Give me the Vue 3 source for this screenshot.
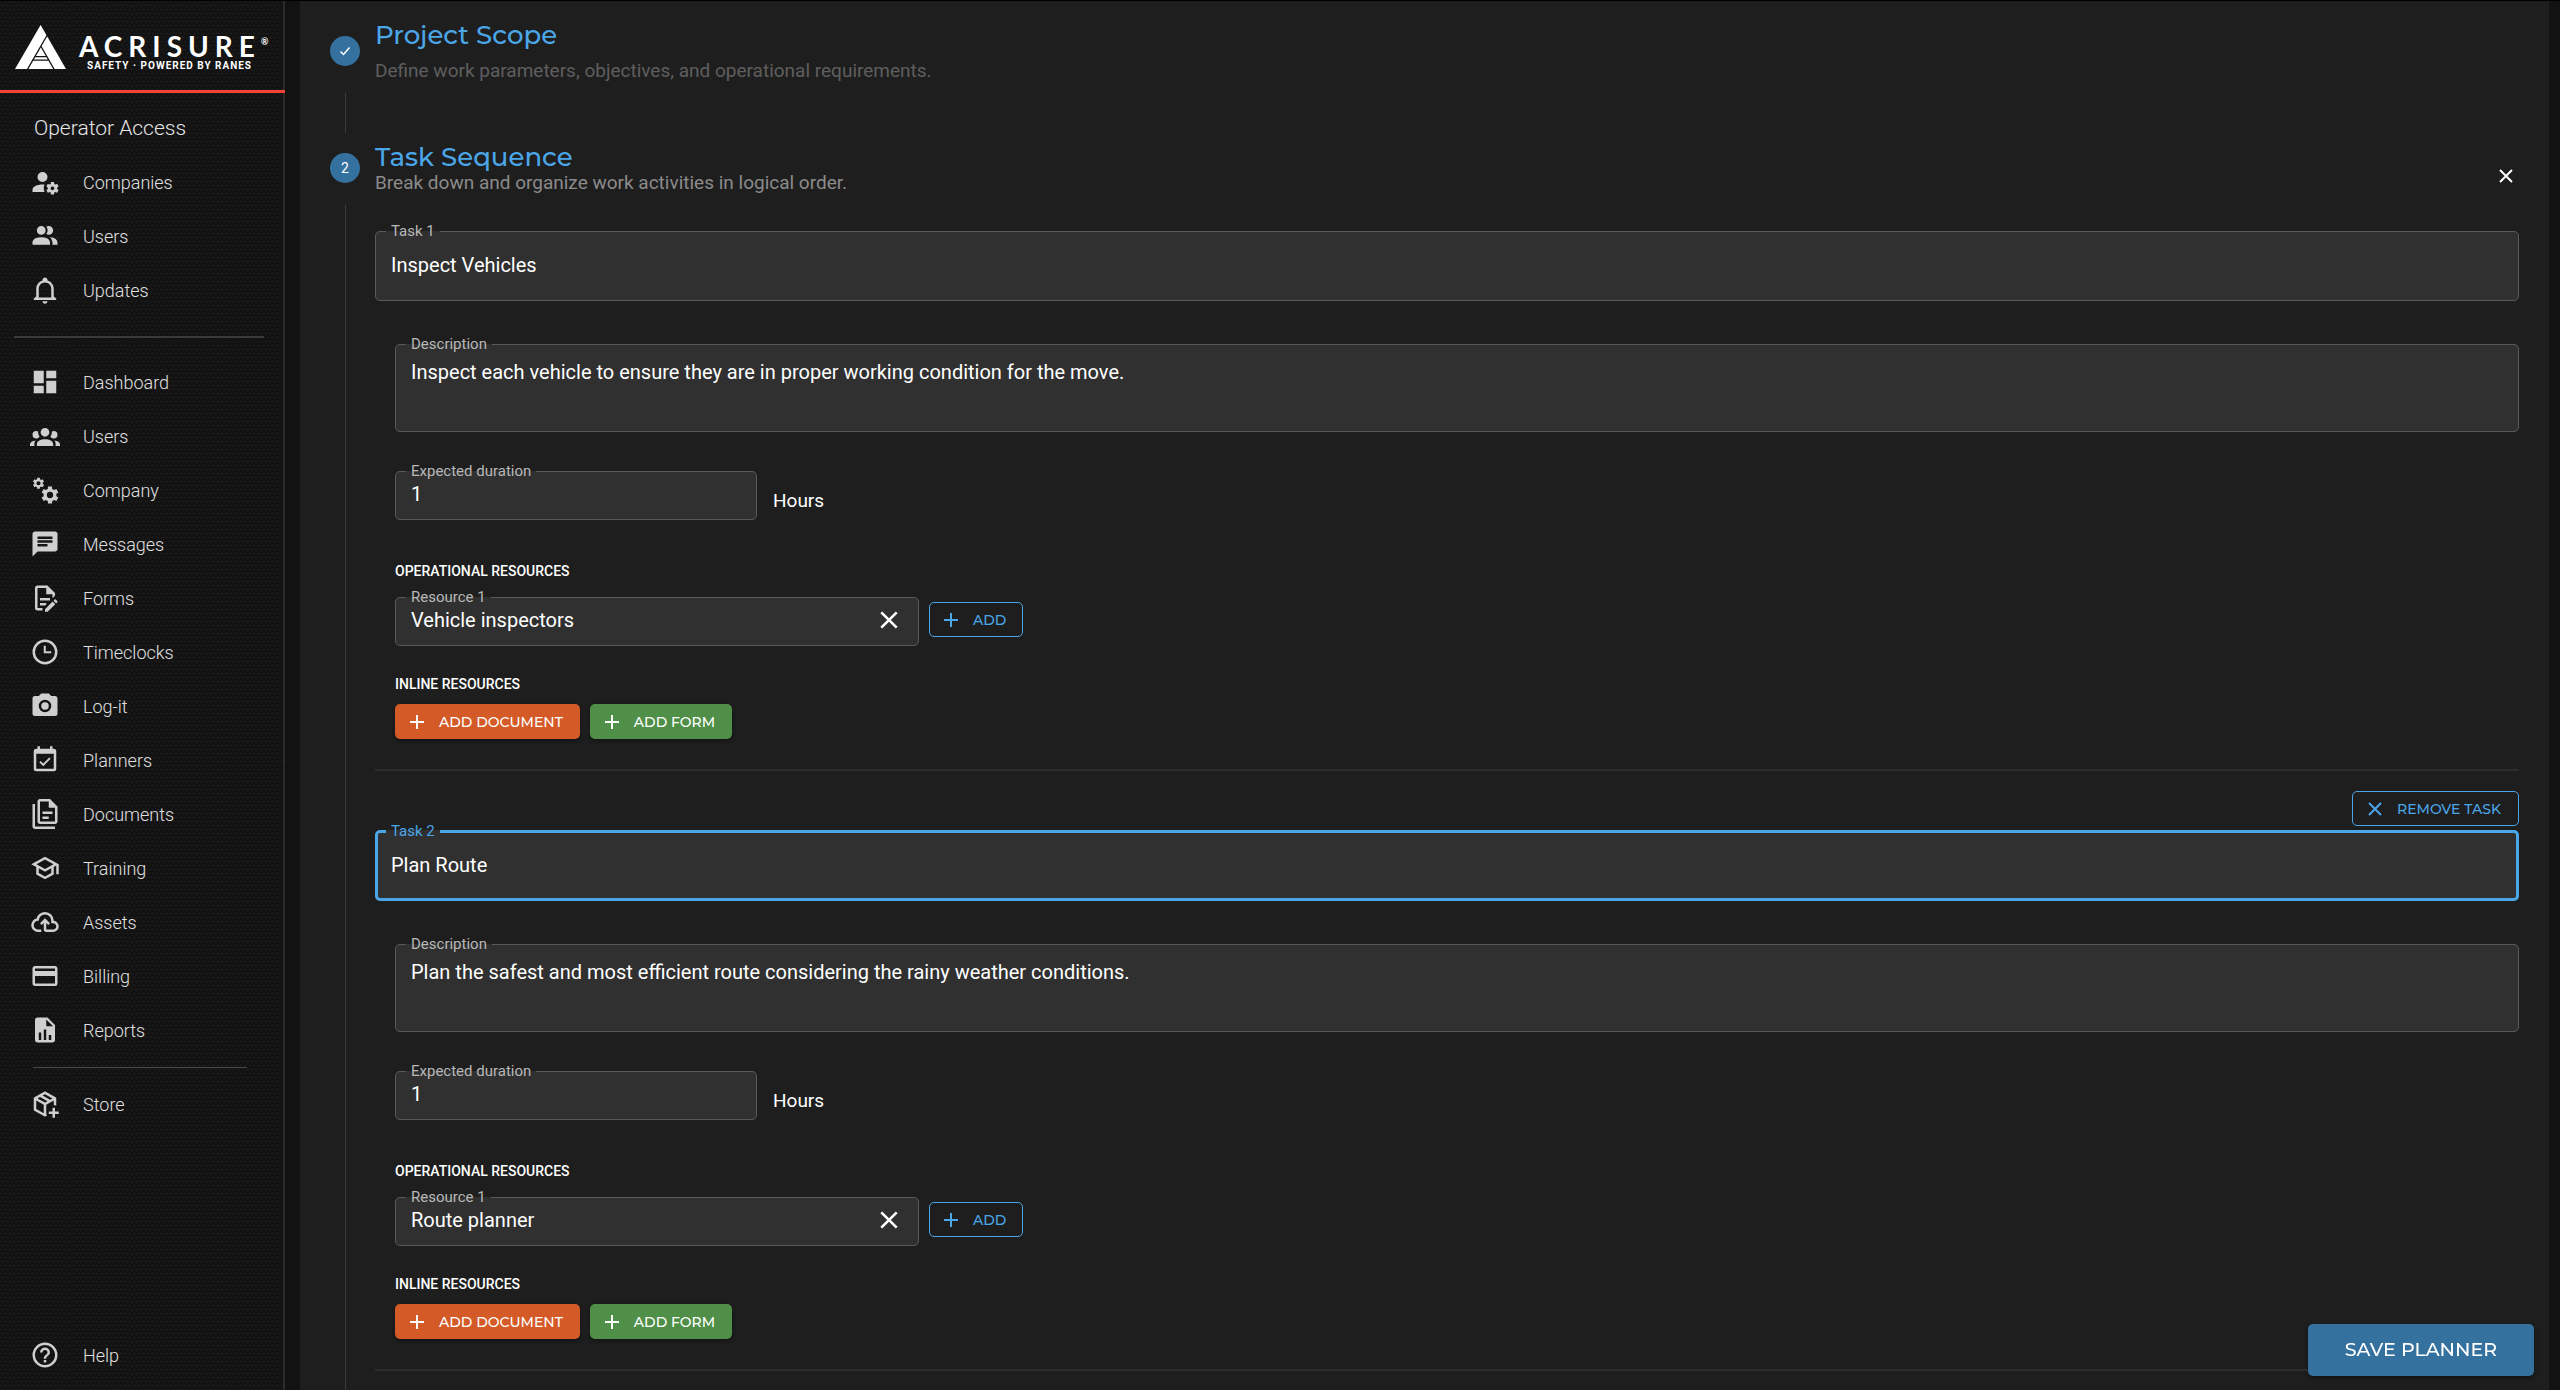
<template>
  <div class="app-shell">
    <aside class="sidebar">
      <a class="brand" href="#home">
        <svg class="brand-mark" viewBox="0 0 51 44" aria-hidden="true">
          <path fill="#fff" d="M25.6 0L51 44H0z" />
          <path
            fill="none"
            stroke="#131313"
            stroke-width="1.3"
            d="M12.4 44.5L32.6 9.5M39.2 44.5L25.8 21M19.5 31.6H32.5M17 35.2H34.5"
          />
        </svg>
        <span class="brand-text">
          <span class="brand-name">ACRISURE<sup>®</sup></span>
          <span class="brand-sub">SAFETY · POWERED BY RANES</span>
        </span>
      </a>

      <h2 class="nav-title">Operator Access</h2>
      <nav class="nav">
        <a v-for="item in operatorItems" :key="item.label" class="nav-item" href="#">
          <svg class="nav-icon" viewBox="0 0 24 24"><path :d="item.icon" /></svg>
          {{ item.label }}
        </a>
      </nav>
      <hr class="nav-divider" />
      <nav class="nav">
        <a v-for="item in mainItems" :key="item.label" class="nav-item" href="#">
          <svg class="nav-icon" viewBox="0 0 24 24"><path :d="item.icon" /></svg>
          {{ item.label }}
        </a>
      </nav>
      <hr class="nav-divider inset" />
      <nav class="nav">
        <a class="nav-item" href="#">
          <svg class="nav-icon" viewBox="0 0 24 24"><path :d="icons.store" /></svg>
          Store
        </a>
      </nav>
      <nav class="nav nav-bottom">
        <a class="nav-item" href="#">
          <svg class="nav-icon" viewBox="0 0 24 24"><path :d="icons.help" /></svg>
          Help
        </a>
      </nav>
    </aside>

    <main class="panel">
      <section class="step">
        <header class="step-header">
          <span class="step-badge">
            <svg class="check" viewBox="0 0 12 12"><path d="M1.5 6.5l3 3 6-7" /></svg>
          </span>
          <div class="step-text">
            <h1 class="step-title">Project Scope</h1>
            <p class="step-sub muted">
              Define work parameters, objectives, and operational requirements.
            </p>
          </div>
        </header>
        <div class="connector"></div>
      </section>

      <section class="step">
        <header class="step-header">
          <span class="step-badge">2</span>
          <div class="step-text">
            <h1 class="step-title">Task Sequence</h1>
            <p class="step-sub">Break down and organize work activities in logical order.</p>
          </div>
          <button class="close" type="button" aria-label="Close">
            <svg viewBox="0 0 14 14"><path d="M1 1l12 12M13 1L1 13" /></svg>
          </button>
        </header>

        <div class="step-body">
          <article v-for="(task, i) in tasks" :key="i" class="task">
            <div v-if="i > 0" class="task-actions">
              <button class="btn outlined" type="button" @click="removeTask(i)">
                <svg viewBox="0 0 14 14"><path d="M1 1l12 12M13 1L1 13" /></svg>
                REMOVE TASK
              </button>
            </div>

            <fieldset class="field name" :class="{ active: activeTask === i }">
              <legend><label :for="`task-${i}`">Task {{ i + 1 }}</label></legend>
              <input :id="`task-${i}`" v-model="task.name" type="text" />
            </fieldset>

            <div class="task-details">
              <fieldset class="field description">
                <legend><label :for="`desc-${i}`">Description</label></legend>
                <textarea :id="`desc-${i}`" v-model="task.description"></textarea>
              </fieldset>

              <div class="duration">
                <fieldset class="field small">
                  <legend><label :for="`duration-${i}`">Expected duration</label></legend>
                  <input :id="`duration-${i}`" v-model="task.duration" type="text" />
                </fieldset>
                <span class="unit">Hours</span>
              </div>

              <h3 class="group-title">OPERATIONAL RESOURCES</h3>
              <div class="resources">
                <fieldset class="field resource">
                  <legend><label :for="`resource-${i}`">Resource 1</label></legend>
                  <div class="resource-row">
                    <input :id="`resource-${i}`" v-model="task.resource" type="text" />
                    <button
                      class="clear"
                      type="button"
                      aria-label="Clear resource"
                      @click="task.resource = ''"
                    >
                      <svg viewBox="0 0 14 14"><path d="M1 1l12 12M13 1L1 13" /></svg>
                    </button>
                  </div>
                </fieldset>
                <button class="btn outlined" type="button">
                  <svg viewBox="0 0 14 14"><path d="M7 0v14M0 7h14" /></svg>
                  ADD
                </button>
              </div>

              <h3 class="group-title inline">INLINE RESOURCES</h3>
              <div class="inline-actions">
                <button class="btn orange" type="button">
                  <svg viewBox="0 0 14 14"><path d="M7 0v14M0 7h14" /></svg>
                  ADD DOCUMENT
                </button>
                <button class="btn green" type="button">
                  <svg viewBox="0 0 14 14"><path d="M7 0v14M0 7h14" /></svg>
                  ADD FORM
                </button>
              </div>
            </div>
          </article>
        </div>
      </section>
    </main>

    <button class="save" type="button">SAVE PLANNER</button>
  </div>
</template>

<script setup>
import { ref } from "vue";

// six-toothed cog with a round hole, for the company icon
function cog(cx, cy, r) {
  const points = [];
  for (let i = 0; i < 6; i++) {
    const base = (i * 60 - 90) * (Math.PI / 180);
    for (const [offset, radius] of [
      [-0.34, 0.74],
      [-0.24, 1],
      [0.24, 1],
      [0.34, 0.74],
    ]) {
      const x = cx + Math.cos(base + offset) * r * radius;
      const y = cy + Math.sin(base + offset) * r * radius;
      points.push(`${x.toFixed(2)} ${y.toFixed(2)}`);
    }
  }
  const h = r * 0.36;
  return `M${points.join("L")}ZM${cx - h} ${cy}a${h} ${h} 0 1 0 ${2 * h} 0a${h} ${h} 0 1 0 ${-2 * h} 0Z`;
}

const icons = {
  companies:
    "M10 4A4 4 0 0 0 6 8A4 4 0 0 0 10 12A4 4 0 0 0 14 8A4 4 0 0 0 10 4M17 12C16.87 12 16.76 12.09 16.74 12.21L16.55 13.53C16.25 13.66 15.96 13.82 15.7 14L14.46 13.5C14.35 13.5 14.22 13.5 14.15 13.63L13.15 15.36C13.09 15.47 13.11 15.6 13.21 15.68L14.27 16.5C14.25 16.67 14.24 16.83 14.24 17C14.24 17.17 14.25 17.33 14.27 17.5L13.21 18.32C13.12 18.4 13.09 18.53 13.15 18.64L14.15 20.37C14.21 20.5 14.34 20.5 14.46 20.5L15.7 20C15.96 20.18 16.24 20.35 16.55 20.47L16.74 21.79C16.76 21.91 16.86 22 17 22H19C19.11 22 19.22 21.91 19.24 21.79L19.43 20.47C19.73 20.34 20 20.18 20.27 20L21.5 20.5C21.63 20.5 21.76 20.5 21.83 20.37L22.83 18.64C22.89 18.53 22.86 18.4 22.77 18.32L21.7 17.5C21.72 17.33 21.74 17.17 21.74 17C21.74 16.83 21.73 16.67 21.7 16.5L22.76 15.68C22.85 15.6 22.88 15.47 22.82 15.36L21.82 13.63C21.76 13.5 21.63 13.5 21.5 13.5L20.27 14C20 13.82 19.73 13.65 19.42 13.53L19.23 12.21C19.22 12.09 19.11 12 19 12H17M10 14C5.58 14 2 15.79 2 18V20H11.68A7 7 0 0 1 11 17A7 7 0 0 1 11.64 14.09C11.11 14.03 10.56 14 10 14M18 15.5C18.83 15.5 19.5 16.17 19.5 17C19.5 17.83 18.83 18.5 18 18.5C17.16 18.5 16.5 17.83 16.5 17C16.5 16.17 17.17 15.5 18 15.5Z",
  people:
    "M16 17V19H2V17S2 13 9 13 16 17 16 17M12.5 7.5A3.5 3.5 0 1 0 9 11A3.5 3.5 0 0 0 12.5 7.5M15.94 13A5.32 5.32 0 0 1 18 17V19H22V17S22 13.37 15.94 13M15 4A3.39 3.39 0 0 0 13.07 4.59A5 5 0 0 1 13.07 10.41A3.39 3.39 0 0 0 15 11A3.5 3.5 0 0 0 15 4Z",
  bell: "M10 21H14C14 22.1 13.1 23 12 23S10 22.1 10 21M21 19V20H3V19L5 17V11C5 7.9 7 5.2 10 4.3V4C10 2.9 10.9 2 12 2S14 2.9 14 4V4.3C17 5.2 19 7.9 19 11V17L21 19M17 11C17 8.2 14.8 6 12 6S7 8.2 7 11V18H17V11Z",
  dashboard: "M13 3V9H21V3M13 21H21V11H13M3 21H11V15H3M3 13H11V3H3V13Z",
  group:
    "M12 5.5A3.5 3.5 0 0 1 15.5 9A3.5 3.5 0 0 1 12 12.5A3.5 3.5 0 0 1 8.5 9A3.5 3.5 0 0 1 12 5.5M5 8C5.56 8 6.08 8.15 6.53 8.42C6.38 9.85 6.8 11.27 7.66 12.38C7.16 13.34 6.16 14 5 14A3 3 0 0 1 2 11A3 3 0 0 1 5 8M19 8A3 3 0 0 1 22 11A3 3 0 0 1 19 14C17.84 14 16.84 13.34 16.34 12.38C17.2 11.27 17.62 9.85 17.47 8.42C17.92 8.15 18.44 8 19 8M5.5 18.25C5.5 16.18 8.41 14.5 12 14.5C15.59 14.5 18.5 16.18 18.5 18.25V20H5.5V18.25M0 20V18.5C0 17.11 1.89 15.94 4.45 15.6C3.86 16.28 3.5 17.22 3.5 18.25V20H0M24 20H20.5V18.25C20.5 17.22 20.14 16.28 19.55 15.6C22.11 15.94 24 17.11 24 18.5V20Z",
  cogs: cog(6.8, 6.6, 4.6) + cog(16, 16, 7),
  message:
    "M20 2H4c-1.1 0-1.99.9-1.99 2L2 22l4-4h14c1.1 0 2-.9 2-2V4c0-1.1-.9-2-2-2zM6 9h12v2H6V9zm8 5H6v-2h8v2zm4-6H6V6h12v2z",
  form: "M8 12H16V14H8V12M10 20H6V4H13V9H18V12.1L20 10.1V8L14 2H6A2 2 0 0 0 4 4V20A2 2 0 0 0 6 22H10V20M8 18H12.1L13 17.1V16H8V18M20.2 13C20.3 13 20.5 13.1 20.6 13.2L21.9 14.5C22.1 14.7 22.1 15.1 21.9 15.3L20.9 16.3L18.8 14.2L19.8 13.2C19.9 13.1 20 13 20.2 13M20.2 16.9L14.1 23H12V20.9L18.1 14.8L20.2 16.9Z",
  clock:
    "M12 20A8 8 0 0 0 20 12A8 8 0 0 0 12 4A8 8 0 0 0 4 12A8 8 0 0 0 12 20M12 2A10 10 0 0 1 22 12A10 10 0 0 1 12 22A10 10 0 0 1 2 12A10 10 0 0 1 12 2M11 7H12.6V11.4H17V13H11Z",
  camera:
    "M4 4H7L9 2H15L17 4H20A2 2 0 0 1 22 6V18A2 2 0 0 1 20 20H4A2 2 0 0 1 2 18V6A2 2 0 0 1 4 4M12 7A5 5 0 0 0 7 12A5 5 0 0 0 12 17A5 5 0 0 0 17 12A5 5 0 0 0 12 7M12 9A3 3 0 0 1 15 12A3 3 0 0 1 12 15A3 3 0 0 1 9 12A3 3 0 0 1 12 9Z",
  calendar:
    "M19 3H18V1H16V3H8V1H6V3H5A2 2 0 0 0 3 5V19A2 2 0 0 0 5 21H19A2 2 0 0 0 21 19V5A2 2 0 0 0 19 3M19 19H5V7H19V19M10.6 17L16.5 11L15.4 10L10.6 14.8L8.5 12.7L7.4 13.8Z",
  documents:
    "M16 0H8C6.9 0 6 .9 6 2V18C6 19.1 6.9 20 8 20H20C21.1 20 22 19.1 22 18V6L16 0M20 18H8V2H15V7H20V18M4 4V22H20V24H4C2.9 24 2 23.1 2 22V4H4M10 10V12H18V10H10M10 14V16H15V14H10Z",
  school:
    "M12 3L1 9L5 11.18V17.18L12 21L19 17.18V11.18L21 10.09V17H23V9L12 3M18.82 9L12 12.72L5.18 9L12 5.28L18.82 9M17 16L12 18.72L7 16V12.27L12 15L17 12.27V16Z",
  cloud:
    "M6.5 20Q4.22 20 2.61 18.43 1 16.85 1 14.58 1 12.63 2.17 11.1 3.35 9.57 5.25 9.15 5.88 6.85 7.75 5.43 9.63 4 12 4 14.93 4 16.96 6.04 19 8.07 19 11 20.73 11.2 21.86 12.5 23 13.78 23 15.5 23 17.38 21.69 18.69 20.38 20 18.5 20H13Q12.18 20 11.59 19.41 11 18.83 11 18V12.85L9.4 14.4 8 13 12 9 16 13 14.6 14.4 13 12.85V18H18.5Q19.55 18 20.27 17.27 21 16.55 21 15.5 21 14.45 20.27 13.73 19.55 13 18.5 13H17V11Q17 8.93 15.54 7.46 14.08 6 12 6 9.93 6 8.46 7.46 7 8.93 7 11H6.5Q5.05 11 4.03 12.03 3 13.05 3 14.5 3 15.95 4.03 17 5.05 18 6.5 18H9V20Z",
  card: "M20 8H4V6H20M20 18H4V12H20M20 4H4C2.89 4 2 4.89 2 6V18C2 19.11 2.9 20 4 20H20A2 2 0 0 0 22 18V6C22 4.89 21.1 4 20 4Z",
  report:
    "M14 2H6C4.9 2 4 2.9 4 4V20C4 21.1 4.9 22 6 22H18C19.1 22 20 21.1 20 20V8L14 2M13 9V3.5L18.5 9H13M7 20V14H9V20H7M11 20V11.5H13V20H11M15 20V16H17V20H15Z",
  store:
    "M13 19.3V12.6L19 9.2V13C19.7 13 20.4 13.1 21 13.4V7.5C21 7.1 20.8 6.8 20.5 6.6L12.6 2.2C12.4 2.1 12.2 2 12 2S11.6 2.1 11.4 2.2L3.5 6.6C3.2 6.8 3 7.1 3 7.5V16.5C3 16.9 3.2 17.2 3.5 17.4L11.4 21.8C11.6 21.9 11.8 22 12 22S12.4 21.9 12.6 21.8L13.5 21.3C13.2 20.7 13.1 20 13 19.3M12 4.2L18 7.5L16 8.6L10.1 5.2L12 4.2M11 19.3L5 15.9V9.2L11 12.6V19.3M12 10.8L6 7.5L8 6.3L14 9.7L12 10.8M20 15V18H23V20H20V23H18V20H15V18H18V15H20Z",
  help: "M11 18H13V16H11V18M12 2A10 10 0 0 0 2 12A10 10 0 0 0 12 22A10 10 0 0 0 22 12A10 10 0 0 0 12 2M12 20C7.59 20 4 16.41 4 12C4 7.59 7.59 4 12 4C16.41 4 20 7.59 20 12C20 16.41 16.41 20 12 20M12 6A4 4 0 0 0 8 10H10A2 2 0 0 1 12 8A2 2 0 0 1 14 10C14 12 11 11.75 11 15H13C13 12.75 16 12.5 16 10A4 4 0 0 0 12 6Z",
};

const operatorItems = [
  { label: "Companies", icon: icons.companies },
  { label: "Users", icon: icons.people },
  { label: "Updates", icon: icons.bell },
];

const mainItems = [
  { label: "Dashboard", icon: icons.dashboard },
  { label: "Users", icon: icons.group },
  { label: "Company", icon: icons.cogs },
  { label: "Messages", icon: icons.message },
  { label: "Forms", icon: icons.form },
  { label: "Timeclocks", icon: icons.clock },
  { label: "Log-it", icon: icons.camera },
  { label: "Planners", icon: icons.calendar },
  { label: "Documents", icon: icons.documents },
  { label: "Training", icon: icons.school },
  { label: "Assets", icon: icons.cloud },
  { label: "Billing", icon: icons.card },
  { label: "Reports", icon: icons.report },
];

const activeTask = ref(1);
const tasks = ref([
  {
    name: "Inspect Vehicles",
    description:
      "Inspect each vehicle to ensure they are in proper working condition for the move.",
    duration: "1",
    resource: "Vehicle inspectors",
  },
  {
    name: "Plan Route",
    description:
      "Plan the safest and most efficient route considering the rainy weather conditions.",
    duration: "1",
    resource: "Route planner",
  },
]);

function removeTask(index) {
  tasks.value.splice(index, 1);
}
</script>

<style>
body {
  margin: 0;
  background: #121212;
}
</style>

<style scoped>
.app-shell {
  display: flex;
  height: 100vh;
  overflow: hidden;
  box-sizing: border-box;
  border-top: 1px solid #000;
  background: #121212;
  color: #fff;
  font-family: Roboto, sans-serif;
  font-size: 18px;
}

.app-shell * {
  box-sizing: border-box;
}

h1,
h2,
h3,
p {
  margin: 0;
}

/* Sidebar */
.sidebar {
  display: flex;
  flex-direction: column;
  flex: 0 0 285px;
  border-right: 2px solid #2b2b2b;
  background-color: #131313;
  background-image: repeating-linear-gradient(
      0deg,
      rgba(255, 255, 255, 0.025) 0 1px,
      transparent 1px 4px
    ),
    repeating-linear-gradient(60deg, rgba(0, 0, 0, 0.25) 0 1px, transparent 1px 4px),
    repeating-linear-gradient(120deg, rgba(255, 255, 255, 0.02) 0 1px, transparent 1px 4px);
}

.brand {
  display: flex;
  align-items: flex-end;
  gap: 13px;
  height: 92px;
  margin-right: -2px;
  padding: 0 0 21px 15px;
  border-bottom: 3px solid #f44336;
  color: #fff;
  text-decoration: none;
}

.brand-mark {
  width: 51px;
  height: 44px;
}

.brand-text {
  display: flex;
  flex-direction: column;
  margin-bottom: -3px;
}

.brand-name {
  font: 700 28px/28px Lato, sans-serif;
  letter-spacing: 6px;
  white-space: nowrap;
}

.brand-name sup {
  font-size: 9px;
  line-height: 9px;
  vertical-align: 12px;
  letter-spacing: 0;
}

.brand-sub {
  padding-left: 8px;
  font-size: 10px;
  font-weight: 700;
  line-height: 12px;
  letter-spacing: 1px;
  white-space: nowrap;
}

.nav-title {
  padding: 8px 0 0 34px;
  font-size: 21px;
  font-weight: 300;
  line-height: 54px;
  color: #e6e6e6;
}

.nav {
  display: flex;
  flex-direction: column;
}

.nav-item {
  display: flex;
  align-items: center;
  gap: 23px;
  height: 54px;
  padding-left: 30px;
  font-weight: 300;
  color: #e0e0e0;
  text-decoration: none;
}

.nav-icon {
  width: 30px;
  height: 30px;
  fill: #cfcfcf;
  fill-rule: evenodd;
}

.nav-divider {
  width: auto;
  height: 2px;
  margin: 19px 19px 17px 14px;
  border: 0;
  background: #3a3a3a;
}

.nav-divider.inset {
  height: 1px;
  margin: 10px 36px 9px 33px;
  background: #4a4a4a;
}

.nav-bottom {
  margin-top: auto;
  padding-bottom: 8px;
}

/* Stepper */
.panel {
  flex: 1;
  min-width: 0;
  margin: 0 11px 0 15px;
  padding: 19px 30px 0;
  background: #1e1e1e;
}

.step-header {
  display: flex;
  align-items: center;
  gap: 15px;
}

.step-badge {
  display: flex;
  align-items: center;
  justify-content: center;
  width: 30px;
  height: 30px;
  border-radius: 50%;
  background: #35719f;
  font-size: 14px;
}

.check {
  width: 12px;
  height: 12px;
  fill: none;
  stroke: #fff;
  stroke-width: 1.5;
}

.step-title {
  font-family: Montserrat, Inter, sans-serif;
  font-size: 26px;
  font-weight: 500;
  line-height: 30px;
  color: #4ba6e8;
}

.step-sub {
  font-size: 19px;
  line-height: 22px;
  color: #8b8b8b;
}

.step-sub.muted {
  margin-top: 10px;
  color: #5e5e5e;
}

.connector {
  width: 1px;
  height: 40px;
  margin: 11px 0 9px 15px;
  background: #3c3c3c;
}

.close {
  align-self: flex-end;
  width: 26px;
  height: 36px;
  margin-left: auto;
  padding: 0;
  border: 0;
  background: none;
}

.close svg {
  display: block;
  width: 14px;
  height: 14px;
  margin: auto;
}

svg path[d^="M1 1"],
.btn path {
  fill: none;
  stroke: currentColor;
  stroke-width: 2;
}

.close,
.clear {
  color: #fff;
}

.step-body {
  margin: 11px 0 0 15px;
  padding: 16px 0 40px 29px;
  border-left: 1px solid #3c3c3c;
}

/* Task form */
.task {
  margin-bottom: 20px;
  padding-bottom: 30px;
  border-bottom: 2px solid #2e2e2e;
}

.task-actions {
  display: flex;
  justify-content: flex-end;
  margin-bottom: -5px;
}

.task-details {
  padding-left: 20px;
}

.field {
  min-width: 0;
  margin: 0;
  padding: 0 15px 12px;
  border: 1px solid #5a5a5a;
  border-radius: 5px;
  background: #303030;
}

.field legend {
  margin-left: -5px;
  padding: 0 5px;
  font-size: 15px;
  line-height: 20px;
  color: #b8b8b8;
}

.field legend label {
  display: block;
}

.field input,
.field textarea {
  display: block;
  width: 100%;
  height: 26px;
  padding: 0;
  border: 0;
  outline: 0;
  background: none;
  color: #fff;
  font: 20px/24px Roboto, sans-serif;
}

.field.name input {
  height: 47px;
}

.field.active {
  border: 3px solid #4ba6e8;
  padding: 0 13px 10px;
}

.field.active legend {
  color: #4ba6e8;
}

.field.description {
  margin-top: 33px;
}

.field textarea {
  height: 65px;
  padding-top: 6px;
  resize: none;
}

.duration {
  display: flex;
  align-items: flex-end;
  gap: 16px;
  margin: 29px 0 41px;
}

.field.small {
  width: 362px;
}

.unit {
  padding-bottom: 7px;
  font-size: 19px;
  line-height: 24px;
}

.group-title {
  font-size: 14px;
  font-weight: 500;
  line-height: 20px;
}

.group-title.inline {
  margin-top: 28px;
}

.resources {
  display: flex;
  align-items: flex-end;
  gap: 10px;
  margin-top: 6px;
}

.resources .btn {
  margin-bottom: 9px;
}

.field.resource {
  width: 524px;
}

.resource-row {
  display: flex;
  align-items: center;
}

.clear {
  width: 30px;
  height: 26px;
  padding: 0;
  border: 0;
  background: none;
}

.clear svg {
  display: block;
  width: 18px;
  height: 18px;
  margin: auto;
}

.inline-actions {
  display: flex;
  gap: 10px;
  margin-top: 10px;
}

.btn {
  display: flex;
  align-items: center;
  gap: 15px;
  height: 35px;
  padding: 0 16px 0 14px;
  border: 1px solid transparent;
  border-radius: 5px;
  color: #fff;
  font: 500 14px/20px Montserrat, Inter, sans-serif;
  white-space: nowrap;
}

.btn svg {
  width: 14px;
  height: 14px;
}

.btn.outlined {
  border-color: #4ba6e8;
  background: none;
  color: #4ba6e8;
}

.task-actions .btn {
  padding: 0 17px 0 15px;
}

.btn.orange {
  background: #d45b27;
  box-shadow: 0 2px 4px rgba(0, 0, 0, 0.4);
}

.btn.green {
  background: #4f8f47;
  box-shadow: 0 2px 4px rgba(0, 0, 0, 0.4);
}

.save {
  position: fixed;
  right: 26px;
  bottom: 14px;
  height: 52px;
  padding: 0 37px;
  border: 0;
  border-radius: 5px;
  background: #35719f;
  box-shadow: 0 2px 4px rgba(0, 0, 0, 0.4);
  color: #fff;
  font: 500 19px/24px Montserrat, Inter, sans-serif;
}
</style>
